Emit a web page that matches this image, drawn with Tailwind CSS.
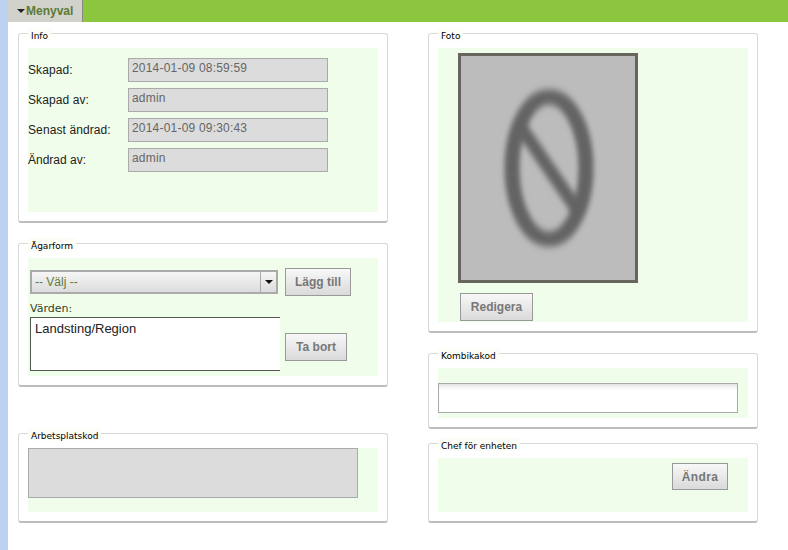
<!doctype html>
<html lang="sv">
<head>
<meta charset="utf-8">
<script src="https://cdn.jsdelivr.net/npm/@tailwindcss/browser@4"></script>
</head>
<body class="bg-white font-['Liberation_Sans',Arial,sans-serif]">
<div class="flex h-[550px] w-[788px] overflow-hidden">
  <div class="w-2 shrink-0 bg-[#bcd2f0]"></div>
  <div class="flex-1 flex flex-col">
    <div class="h-[22px] bg-[#8cc63f] flex shrink-0">
      <div class="w-[75px] bg-[#d2d2cc] border-r border-[#8a8a80] flex items-center pl-[9px] text-[12px] font-bold text-[#5d7a35]">
        <span class="w-0 h-0 border-x-[4px] border-x-transparent border-t-[4px] border-t-[#222] mr-[1px]"></span>Menyval
      </div>
    </div>
    <div class="flex pl-[10px] pt-[11px] gap-[40px]">
      <!-- left column -->
      <div class="w-[370px] flex flex-col">
        <section class="relative h-[190px] border border-[#d8d8d8] border-b-[#bdbdbd] border-b-2 rounded-[3px] pt-[14px] px-[9px] pb-[9px]">
          <h3 class="absolute left-[9px] top-[-6px] h-[13px] px-[3px] bg-[#fbfdf6] text-[9px] leading-[16px] font-['DejaVu_Sans',sans-serif] font-normal text-black">Info</h3>
          <div class="h-full bg-[#f1fdeb] pt-[10px] flex flex-col gap-[6px] text-[12px] text-[#222]">
            <div class="flex items-center h-[24px]"><span class="w-[100px] tracking-[0.1px]">Skapad:</span><div class="w-[200px] h-[24px] bg-[#dcdcdc] border border-[#aaaaaa] pl-[3px] tracking-[0.2px] text-[#666]">2014-01-09 08:59:59</div></div>
            <div class="flex items-center h-[24px]"><span class="w-[100px] tracking-[0.1px]">Skapad av:</span><div class="w-[200px] h-[24px] bg-[#dcdcdc] border border-[#aaaaaa] pl-[3px] tracking-[0.2px] text-[#666]">admin</div></div>
            <div class="flex items-center h-[24px]"><span class="w-[100px] tracking-[0.1px]">Senast ändrad:</span><div class="w-[200px] h-[24px] bg-[#dcdcdc] border border-[#aaaaaa] pl-[3px] tracking-[0.2px] text-[#666]">2014-01-09 09:30:43</div></div>
            <div class="flex items-center h-[24px]"><span class="w-[100px]">Ändrad av:</span><div class="w-[200px] h-[24px] bg-[#dcdcdc] border border-[#aaaaaa] pl-[3px] tracking-[0.2px] text-[#666]">admin</div></div>
          </div>
        </section>

        <section class="relative mt-[20px] h-[144px] border border-[#d8d8d8] border-b-[#bdbdbd] border-b-2 rounded-[3px] pt-[14px] px-[9px] pb-[9px]">
          <h3 class="absolute left-[9px] top-[-6px] h-[13px] px-[3px] bg-[#fbfdf6] text-[9px] leading-[16px] font-['DejaVu_Sans',sans-serif] font-normal text-black">Ägarform</h3>
          <div class="h-full bg-[#f1fdeb] pl-[2px] pt-[10px] flex gap-[5px]">
            <div class="w-[250px] flex flex-col">
              <div class="mt-[2px] w-[248px] h-[24px] border-2 border-[#aaaaaa] bg-gradient-to-b from-[#f6f6f6] to-[#dcdcdc] flex items-center justify-between text-[12px] text-[#5e7d3c] pl-[3px]">
                <span>-- Välj --</span>
                <span class="w-[16px] h-full border-l border-[#aaaaaa] flex items-center justify-center"><span class="w-0 h-0 border-x-[4px] border-x-transparent border-t-[4px] border-t-[#111]"></span></span>
              </div>
              <label class="mt-[7px] h-[16px] text-[11px] leading-[16px] font-['DejaVu_Sans',sans-serif] text-[#334028]">Värden:</label>
              <div class="h-[54px] bg-white border border-r-0 border-[#555] pl-[4px] pt-[2px] text-[13px] leading-[18px] text-[#222]">Landsting/Region</div>
            </div>
            <div class="flex flex-col items-start justify-between pb-[15px]">
              <button class="w-[66px] h-[28px] border border-[#999] bg-gradient-to-b from-[#f8f8f8] to-[#dadada] text-[12px] font-bold text-[#777]">Lägg till</button>
              <button class="w-[62px] h-[28px] border border-[#999] bg-gradient-to-b from-[#f8f8f8] to-[#dadada] text-[12px] font-bold text-[#777]">Ta bort</button>
            </div>
          </div>
        </section>

        <section class="relative mt-[46px] h-[90px] border border-[#d8d8d8] border-b-[#bdbdbd] border-b-2 rounded-[3px] pt-[14px] px-[9px] pb-[9px]">
          <h3 class="absolute left-[9px] top-[-6px] h-[13px] px-[3px] bg-[#fbfdf6] text-[9px] leading-[16px] font-['DejaVu_Sans',sans-serif] font-normal text-black">Arbetsplatskod</h3>
          <div class="h-full bg-[#f1fdeb]">
            <div class="w-[330px] h-[50px] bg-[#dcdcdc] border border-[#aaaaaa]"></div>
          </div>
        </section>
      </div>

      <!-- right column -->
      <div class="w-[330px] flex flex-col">
        <section class="relative h-[300px] border border-[#d8d8d8] border-b-[#bdbdbd] border-b-2 rounded-[3px] pt-[14px] px-[9px] pb-[9px]">
          <h3 class="absolute left-[9px] top-[-6px] h-[13px] px-[3px] bg-[#fbfdf6] text-[9px] leading-[16px] font-['DejaVu_Sans',sans-serif] font-normal text-black">Foto</h3>
          <div class="h-full bg-[#f1fdeb] pl-[20px] pt-[5px] flex flex-col items-start">
            <svg class="block" width="180" height="230" viewBox="0 0 180 230">
              <defs>
                <filter id="b" x="-30%" y="-30%" width="160%" height="160%"><feGaussianBlur stdDeviation="2.8 3.6"/></filter>
                <filter id="e" x="-5%" y="-5%" width="110%" height="110%"><feGaussianBlur stdDeviation="0.6"/></filter>
              </defs>
              <rect width="180" height="230" fill="#bcbcbc"/>
              <rect x="1.5" y="1.5" width="177" height="227" fill="none" stroke="#66665f" stroke-width="3" filter="url(#e)"/>
              <rect x="0" y="0" width="180" height="230" fill="none" stroke="#66665f" stroke-width="2"/>
              <g filter="url(#b)" fill="none" stroke="#636363">
                <ellipse cx="91" cy="115" rx="37" ry="71" stroke-width="15"/>
                <line x1="60" y1="70" x2="120" y2="158" stroke-width="13"/>
              </g>
            </svg>
            <button class="ml-[2px] mt-[10px] w-[73px] h-[28px] border border-[#999] bg-gradient-to-b from-[#f8f8f8] to-[#dadada] text-[12px] font-bold text-[#777]">Redigera</button>
          </div>
        </section>

        <section class="relative mt-[20px] h-[76px] border border-[#d8d8d8] border-b-[#bdbdbd] border-b-2 rounded-[3px] pt-[14px] px-[9px] pb-[9px]">
          <h3 class="absolute left-[9px] top-[-6px] h-[13px] px-[3px] bg-[#fbfdf6] text-[9px] leading-[16px] font-['DejaVu_Sans',sans-serif] font-normal text-black">Kombikakod</h3>
          <div class="h-full bg-[#f1fdeb] pt-[15px]">
            <div class="w-[300px] h-[30px] bg-white border border-[#aaaaaa] shadow-[inset_0_5px_5px_-3px_#dddddd]"></div>
          </div>
        </section>

        <section class="relative mt-[14px] h-[80px] border border-[#d8d8d8] border-b-[#bdbdbd] border-b-2 rounded-[3px] pt-[14px] px-[9px] pb-[9px]">
          <h3 class="absolute left-[9px] top-[-6px] h-[13px] px-[3px] bg-[#fbfdf6] text-[9px] leading-[16px] font-['DejaVu_Sans',sans-serif] font-normal text-black">Chef för enheten</h3>
          <div class="h-full bg-[#f1fdeb] pt-[5px] pr-[20px] flex justify-end items-start">
            <button class="w-[56px] h-[27px] border border-[#999] bg-gradient-to-b from-[#f8f8f8] to-[#dadada] text-[12px] font-bold tracking-[0.4px] text-[#777]">Ändra</button>
          </div>
        </section>
      </div>
    </div>
  </div>
</div>
</body>
</html>
